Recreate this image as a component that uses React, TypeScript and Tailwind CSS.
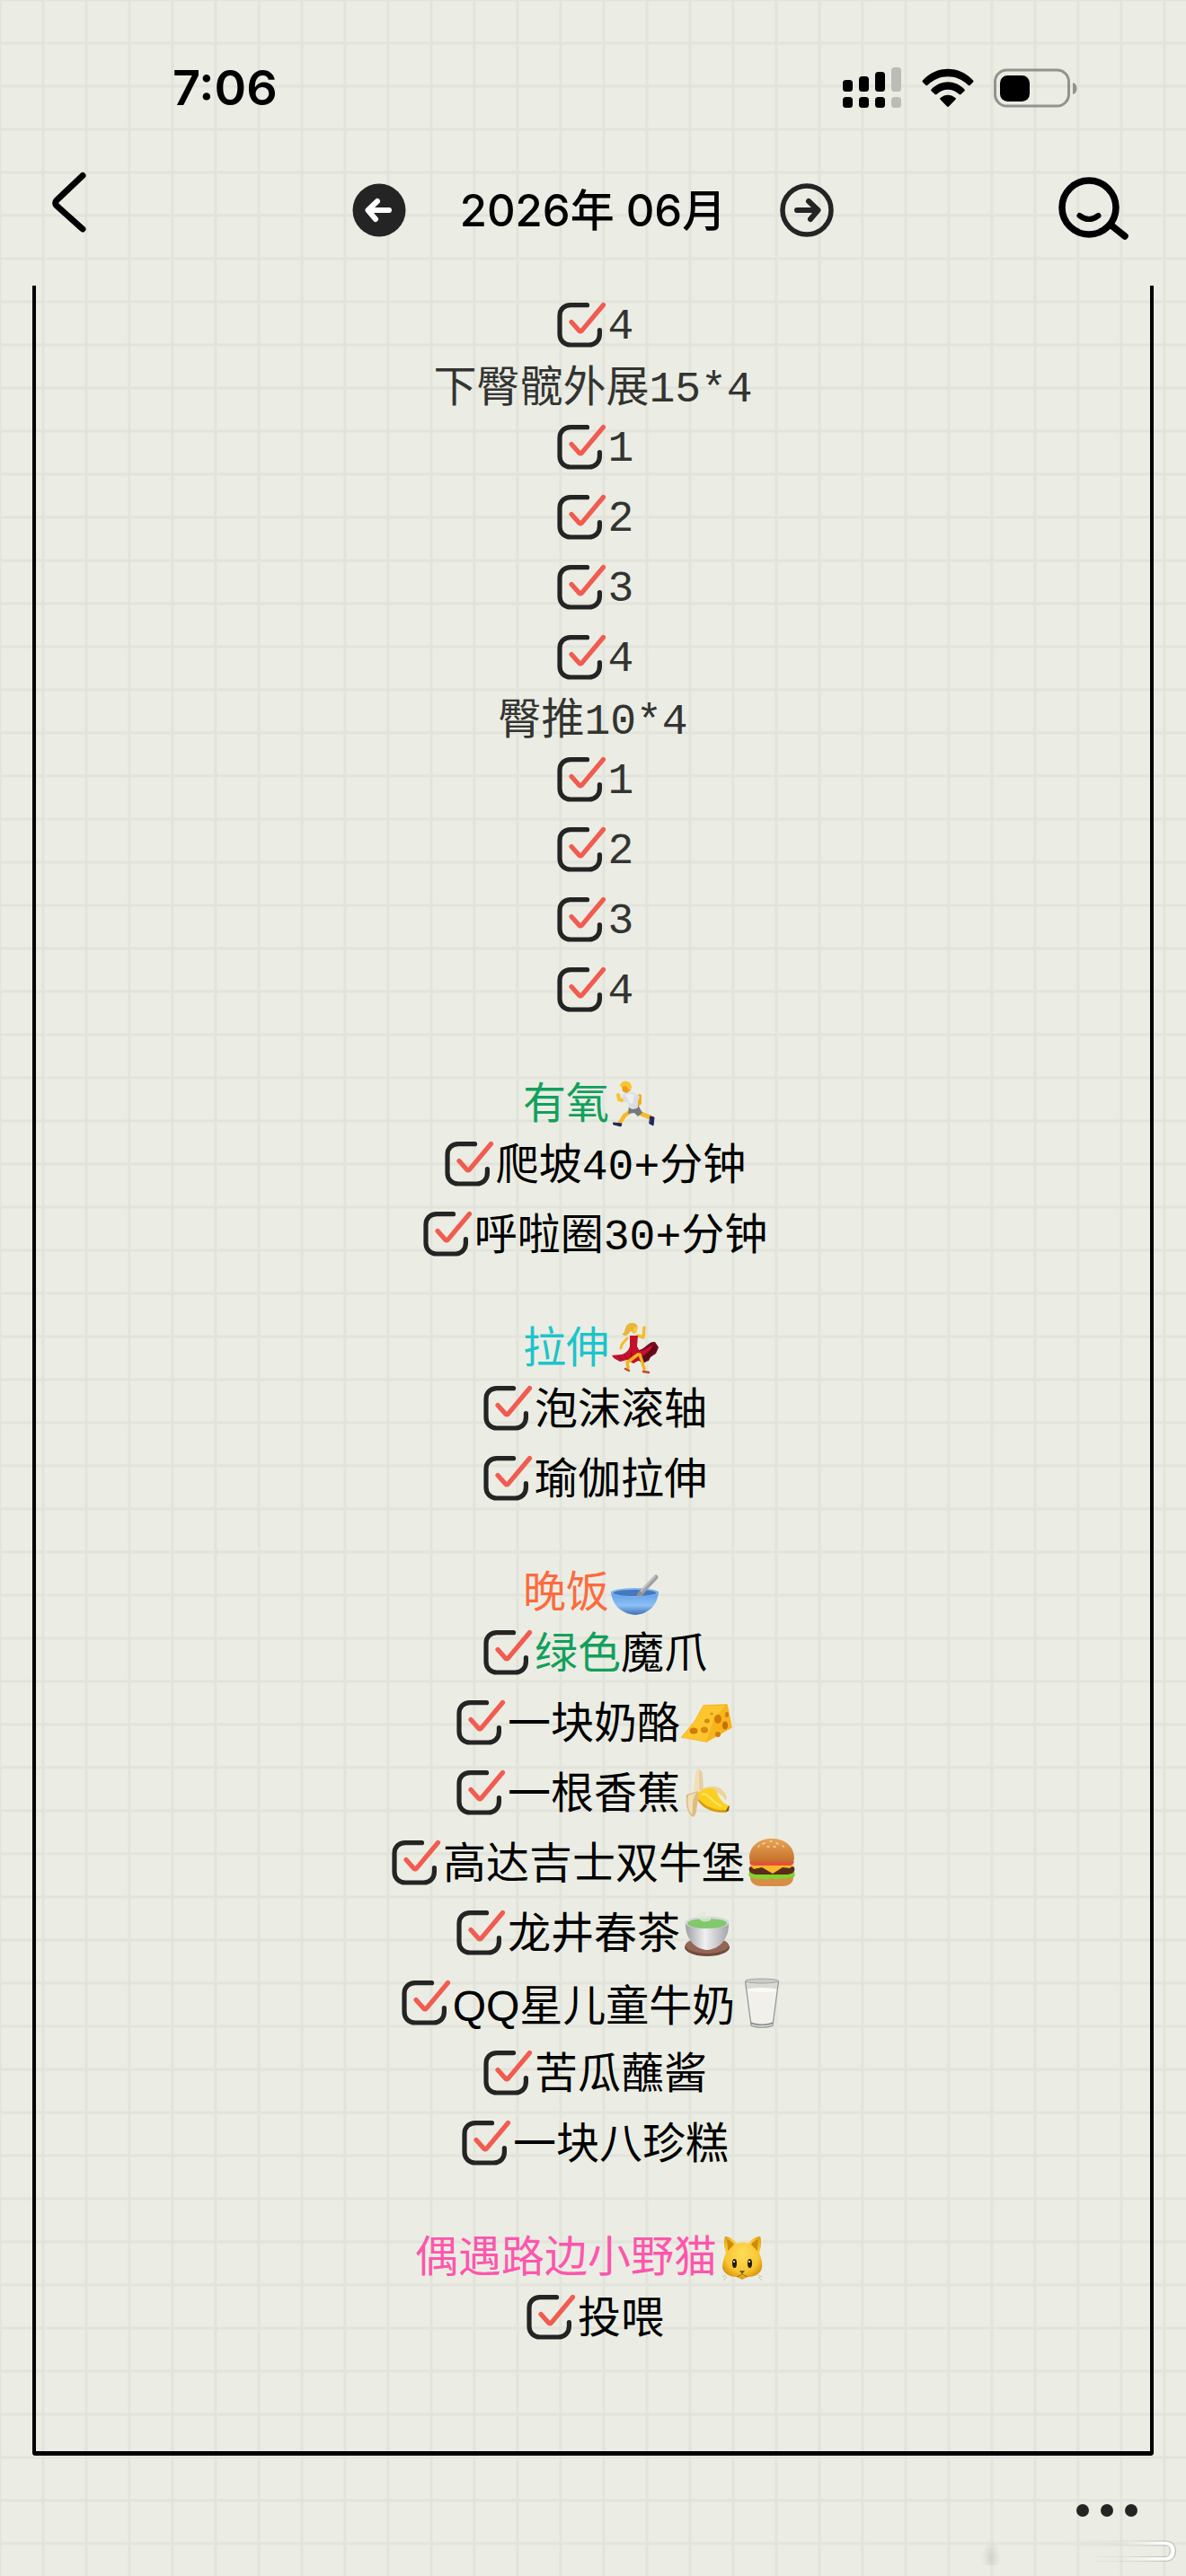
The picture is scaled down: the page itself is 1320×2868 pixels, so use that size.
import { useState } from "react";
import type { ReactNode } from "react";

type EmojiName =
  | "runner"
  | "dancer"
  | "bowl"
  | "cheese"
  | "banana"
  | "burger"
  | "tea"
  | "milk"
  | "cat";

interface Task {
  text: string;
  prefix?: string;
  emoji?: EmojiName;
  sans?: boolean;
}

interface Section {
  title?: string;
  titleClass?: string;
  emoji?: EmojiName;
  muted?: boolean;
  spaced?: boolean;
  tasks: Task[];
}

const sections: Section[] = [
  { muted: true, tasks: [{ text: "4" }] },
  {
    title: "下臀髋外展15*4",
    titleClass: "text-[#333432]",
    muted: true,
    tasks: [{ text: "1" }, { text: "2" }, { text: "3" }, { text: "4" }],
  },
  {
    title: "臀推10*4",
    titleClass: "text-[#333432]",
    muted: true,
    tasks: [{ text: "1" }, { text: "2" }, { text: "3" }, { text: "4" }],
  },
  {
    title: "有氧",
    titleClass: "text-[#12a05c]",
    emoji: "runner",
    spaced: true,
    tasks: [{ text: "爬坡40+分钟" }, { text: "呼啦圈30+分钟" }],
  },
  {
    title: "拉伸",
    titleClass: "text-[#1cc4cc]",
    emoji: "dancer",
    spaced: true,
    tasks: [{ text: "泡沫滚轴" }, { text: "瑜伽拉伸" }],
  },
  {
    title: "晚饭",
    titleClass: "text-[#fb6b3f]",
    emoji: "bowl",
    spaced: true,
    tasks: [
      { prefix: "绿色", text: "魔爪" },
      { text: "一块奶酪", emoji: "cheese" },
      { text: "一根香蕉", emoji: "banana" },
      { text: "高达吉士双牛堡", emoji: "burger" },
      { text: "龙井春茶", emoji: "tea" },
      { text: "QQ星儿童牛奶", emoji: "milk", sans: true },
      { text: "苦瓜蘸酱" },
      { text: "一块八珍糕" },
    ],
  },
  {
    title: "偶遇路边小野猫",
    titleClass: "text-[#fc56ad]",
    emoji: "cat",
    spaced: true,
    tasks: [{ text: "投喂" }],
  },
];

const emojiLabels: Record<EmojiName, string> = {
  runner: "🏃",
  dancer: "💃",
  bowl: "🥣",
  cheese: "🧀",
  banana: "🍌",
  burger: "🍔",
  tea: "🍵",
  milk: "🥛",
  cat: "🐱",
};

const emojiArt: Record<EmojiName, ReactNode> = {
  runner: (
    <g strokeLinecap="round" strokeLinejoin="round" fill="none">
      <path d="M34 22 L34 30 L28 35" stroke="#f2ae1c" strokeWidth="4" />
      <path d="M32 40 L38 43 L46 46" stroke="#f6b92a" strokeWidth="5" />
      <path d="M23 40 L17 44 L14 49 L11 53" stroke="#f6b92a" strokeWidth="4.5" />
      <path d="M46 45 L50 46 L49 55 L45 53 Z" fill="#20265c" stroke="#20265c" />
      <path d="M5 52 L14 53 L13 56 L5 54 Z" fill="#20265c" stroke="#20265c" />
      <path d="M22 33 L32 32 L37 41 L32 45 L28 41 L21 42 Z" fill="#77787c" />
      <path
        d="M15 21 C19 17 26 17 30 20 L34 23 L32 28 L32 35 C28 38 24 37 22 35 L21 29 L16 29 L13 26 Z"
        fill="#dcdde3"
      />
      <path d="M18 21 C21 19 25 19 28 21 L26 31 L23 30 Z" fill="#eeeef2" />
      <path d="M14 27 L11 26 L10 21" stroke="#f8c22e" strokeWidth="4" />
      <path d="M14 11 L23 10 L24 16 L19 19 L15 17 Z" fill="#ec9c1c" />
      <path d="M12 11 C13 4 24 4 25 12 C25 16 22 17 21 14 L19 11 L13 12 Z" fill="#fbc52f" />
    </g>
  ),
  dancer: (
    <g strokeLinecap="round" strokeLinejoin="round" fill="none">
      <path d="M32 17 L38 19 L39 8" stroke="#f5bd2d" strokeWidth="3.5" />
      <path d="M20 20 L14 27 L13 31" stroke="#f5bd2d" strokeWidth="3" />
      <path
        d="M30 34 C42 32 43 23 51 24 L55 30 L52 37 L46 41 L44 45 L37 47 L27 42 Z"
        fill="#760b20"
      />
      <path
        d="M23 17 L32 17 L31 29 L34 34 C42 33 43 29 48 28 L44 37 L36 43 L27 48 L20 44 L12 46 L5 42 L3 39 L14 38 C20 36 22 32 23 29 Z"
        fill="#c4112c"
      />
      <path d="M36 40 C40 39 45 33 51 29 L53 33 L46 40 L40 47 L34 46 Z" fill="#5f0a1c" />
      <path d="M10 40 L15 44 M17 38 L20 43 M25 34 L24 44" stroke="#8e0b22" strokeWidth="1" />
      <path d="M32 38 L20 47 L21 53" stroke="#f2b51f" strokeWidth="3.5" />
      <path d="M34 38 L37 47 L39 54" stroke="#f2b51f" strokeWidth="3.5" />
      <path d="M18 54 L22 56 M38 57 L44 58" stroke="#b84b30" strokeWidth="2.5" />
      <path
        d="M20 5 C26 0 34 4 31 11 L28 15 L24 12 C20 17 18 19 14 15 C18 15 17 8 20 5 Z"
        fill="#e9b63a"
      />
      <path d="M27 8 L31 8 L31 13 L27 15 Z" fill="#f8c83c" />
    </g>
  ),
  bowl: (
    <g>
      <path d="M2 30 C3 45 14 55 29 56 C44 55 54 45 55 30 Z" fill="url(#bowlFill)" />
      <ellipse cx="28.5" cy="31" rx="26.5" ry="5" fill="#7eb4ef" />
      <ellipse cx="28.5" cy="31.5" rx="24" ry="3.5" fill="#4479bd" />
      <path d="M34 33 L52 14" stroke="#9fa0a6" strokeWidth="5" strokeLinecap="round" />
      <path d="M35 30 L51 13" stroke="#c5c5ca" strokeWidth="1.5" strokeLinecap="round" />
      <path d="M30 35 L34 29 L39 34 Z" fill="#8c8f98" />
    </g>
  ),
  cheese: (
    <g>
      <path d="M2 46 L16 29 L26 11 L52 10 L57 35 L29 51 Z" fill="#f7b51d" stroke="#f7b51d" strokeWidth="1.5" strokeLinejoin="round" />
      <path d="M2 46 L16 29 L26 11 L50 11 L37 27 L29 51 Z" fill="#fdc62e" />
      <ellipse cx="15" cy="39" rx="4.5" ry="3.5" fill="#d17b0b" />
      <ellipse cx="27" cy="38" rx="4" ry="3.5" fill="#d68612" />
      <ellipse cx="30" cy="28" rx="3" ry="2.5" fill="#d68612" />
      <ellipse cx="42" cy="26" rx="4" ry="5" fill="#d47a09" />
      <ellipse cx="50" cy="33" rx="3" ry="4.5" fill="#c96f08" />
      <ellipse cx="52" cy="21" rx="2" ry="3" fill="#d47a09" />
      <ellipse cx="35" cy="20" rx="2" ry="1.5" fill="#de9618" />
      <ellipse cx="42" cy="43" rx="3" ry="3" fill="#d47a09" />
    </g>
  ),
  banana: (
    <g>
      <path d="M17 7 C19 2 22 2 24 6 L26 28 L15 29 Z" fill="#f1dfba" />
      <path d="M21 4 L25 7 L26 27 L21 27 Z" fill="#e0c594" opacity=".6" />
      <path d="M26 25 C38 19 50 26 52 35 L51 39 C46 31 40 27 30 30 Z" fill="#ecd49a" />
      <path d="M7 32 L20 28 L22 34 C17 42 20 52 15 57 C8 55 6 42 7 32 Z" fill="#dcbd84" />
      <path d="M9 33 L18 30 C12 38 15 49 13 54 C8 49 8 39 9 33 Z" fill="#f1dfb8" />
      <path
        d="M20 30 C26 25 36 23 40 28 C43 34 46 42 54 44 C54 48 53 51 50 52 C38 52 25 47 20 38 Z"
        fill="#fbcf22"
      />
      <path d="M21 37 C28 46 40 50 51 49 L50 52 C37 53 25 47 20 39 Z" fill="#d99c12" />
      <path d="M24 32 C30 28 34 40 46 45" stroke="#fee566" strokeWidth="2" fill="none" />
      <path d="M50 52 L53 46 L55 44 L54 50 Z" fill="#79591d" />
    </g>
  ),
  burger: (
    <g>
      <path d="M6 44 H54 C55 52 49 56 42 56 H18 C11 56 5 52 6 44 Z" fill="#d98c45" />
      <path
        d="M5 40 H55 C57 45 54 48 50 46 C46 50 43 46 39 48 C35 50 31 46 27 48 C22 50 20 47 16 48 C11 49 9 46 6 46 C4 45 4 43 5 40 Z"
        fill="#84cf2e"
      />
      <path d="M5 35 C10 31 50 31 55 35 C57 41 51 43 46 43 H14 C9 43 3 41 5 35 Z" fill="#592d1a" />
      <path d="M5 32 H55 L50 36 L42 35 L31 42 L19 35 L10 37 Z" fill="#fdb827" />
      <path d="M6 27 H54 C56 31 52 33 49 33 H11 C7 33 4 31 6 27 Z" fill="#e4513c" />
      <path
        d="M5 25 C5 11 16 3 30 3 C44 3 55 11 55 25 C55 29 50 30 45 29 H15 C10 30 5 29 5 25 Z"
        fill="url(#bunFill)"
      />
      <path
        d="M20 9 l2 -1 M28 6 l2 0 M35 8 l2 1 M42 11 l1 1 M25 12 l2 0 M32 12 l2 0 M15 12 l1 -1"
        stroke="#f6d7a0"
        strokeWidth="1.5"
        strokeLinecap="round"
      />
    </g>
  ),
  tea: (
    <g>
      <ellipse cx="30" cy="46" rx="25" ry="10" fill="#714a3c" />
      <ellipse cx="30" cy="44" rx="24" ry="9" fill="#946654" />
      <path d="M6 18 C5 35 15 48 30 49 C45 48 55 35 54 18 Z" fill="url(#cupFill)" />
      <ellipse cx="30" cy="18.5" rx="24.5" ry="7" fill="#d7d8dc" />
      <ellipse cx="30" cy="19.5" rx="22" ry="5.5" fill="#82c86c" />
      <path
        d="M22 15 C14 11 24 6 22 11 C22 4 31 5 28 12 C36 11 36 17 30 17 C28 18 24 18 22 15 Z"
        fill="#dfe9da"
        opacity=".75"
      />
    </g>
  ),
  milk: (
    <g>
      <path d="M11 6 L18 55 C23 58 37 58 42 55 L49 6 Z" fill="#d2d4d0" opacity=".75" />
      <path d="M12 15 L18 51 C24 54 36 54 42 51 L48 15 Z" fill="#f2f0eb" />
      <ellipse cx="30" cy="15.5" rx="17" ry="2.5" fill="#faf9f6" />
      <ellipse cx="30" cy="5.5" rx="18.5" ry="2.5" fill="#c9ccc8" stroke="#a3a7a5" />
      <path d="M11.5 6 L18 55 C23 58 37 58 42 55 L48.5 6" fill="none" stroke="#8f9393" strokeWidth="1.2" />
      <path d="M18 52 C23 55 37 55 42 52" fill="none" stroke="#73777a" strokeWidth="1.2" />
    </g>
  ),
  cat: (
    <g>
      <path
        d="M9 8 C15 8 20 13 22 16 C26 14 31 14 35 16 C38 12 42 8 48 8 C50 13 49 21 47 26 C49 32 51 37 50 43 C48 52 38 53 34 53 L28 56 L22 53 C15 53 8 50 6 43 C6 37 8 31 10 26 C8 21 7 13 9 8 Z"
        fill="url(#catFill)"
      />
      <path
        d="M11 11 C15 12 18 15 19 17 L12 24 Z M46 11 C42 12 39 15 38 17 L45 24 Z"
        fill="#cf8b0a"
      />
      <ellipse cx="19.5" cy="38" rx="2.5" ry="5" fill="#231b12" />
      <ellipse cx="36.5" cy="38" rx="2.5" ry="5" fill="#231b12" />
      <circle cx="19" cy="36" r="1" fill="#fff" />
      <circle cx="36" cy="36" r="1" fill="#fff" />
      <path d="M25 46 H31 L28 50 Z" fill="#6d5c43" />
      <path d="M28 50 L22 53 M28 50 L34 53" stroke="#a66f10" />
      <path d="M6 53 L10 51 M7 57 L11 53 M50 53 L46 51 M50 57 L46 53" stroke="#c9c1aa" />
    </g>
  ),
};

function Emoji({ name }: { name: EmojiName }) {
  return (
    <svg
      role="img"
      aria-label={emojiLabels[name]}
      viewBox="0 0 60 60"
      className="size-15 shrink-0"
    >
      {emojiArt[name]}
    </svg>
  );
}

// Shared gradients for the emoji drawings
function Gradients() {
  return (
    <svg aria-hidden="true" className="absolute size-0">
      <defs>
        <linearGradient id="bowlFill" x1="0" y1="0" x2="0" y2="1">
          <stop offset="0" stopColor="#5c9be6" />
          <stop offset=".6" stopColor="#8cbff5" />
          <stop offset="1" stopColor="#3d6fb4" />
        </linearGradient>
        <linearGradient id="bunFill" x1="0" y1="0" x2="0" y2="1">
          <stop offset="0" stopColor="#e9a45a" />
          <stop offset="1" stopColor="#c46f28" />
        </linearGradient>
        <linearGradient id="cupFill" x1="0" y1="0" x2="1" y2="0">
          <stop offset="0" stopColor="#9d9ea3" />
          <stop offset=".45" stopColor="#f0f0f3" />
          <stop offset="1" stopColor="#a3a4aa" />
        </linearGradient>
        <radialGradient id="catFill" cx=".5" cy=".4" r=".6">
          <stop offset="0" stopColor="#fedd5a" />
          <stop offset=".7" stopColor="#f9c62f" />
          <stop offset="1" stopColor="#d9960d" />
        </radialGradient>
      </defs>
    </svg>
  );
}

function TaskRow({ task, muted }: { task: Task; muted?: boolean }) {
  const [checked, setChecked] = useState(true);

  return (
    <li className="flex h-[78px] items-center justify-center">
      <label className="flex items-center">
        <span className="grid size-[62px] shrink-0">
          <input
            type="checkbox"
            checked={checked}
            onChange={() => setChecked(!checked)}
            className="col-start-1 row-start-1 size-full appearance-none"
          />
          <svg
            viewBox="0 0 62 62"
            fill="none"
            strokeWidth="5.2"
            strokeLinecap="round"
            strokeLinejoin="round"
            className="pointer-events-none col-start-1 row-start-1 size-full"
          >
            <path
              d="M38.5 8.7 H20 C13 8.7 8 13.5 8 20.5 V41 C8 48 13 53 20 53 H40.5 C47.5 53 52.4 48 52.4 41 V36.7"
              stroke="#242424"
            />
            {checked && (
              <path d="M21 27.5 L29.7 37.3 Q31 38.5 32.3 37.3 L56.5 8.5" stroke="#f15b50" />
            )}
          </svg>
        </span>
        <span
          className={`whitespace-nowrap ${
            task.sans ? "font-['Liberation_Sans','Noto_Sans_CJK_SC',sans-serif]" : ""
          } ${muted ? "pt-1 text-[#333432]" : "pt-2 text-black"}`}
        >
          {task.prefix && <span className="text-[#12a05c]">{task.prefix}</span>}
          {task.text}
        </span>
        {task.emoji && <Emoji name={task.emoji} />}
      </label>
    </li>
  );
}

function StatusBar() {
  return (
    <div className="flex h-36 items-center justify-between pt-13 pr-[120px] pl-48">
      <time className="font-['Inter',sans-serif] text-[54px] leading-none font-semibold">
        7:06
      </time>
      <div className="flex items-center gap-[22px]">
        <svg aria-label="Signal" viewBox="0 0 66 46" className="h-[46px] w-[66px]">
          <g>
            <rect x="0" y="14" width="11" height="13" rx="3.5" />
            <rect x="18" y="10" width="11" height="17" rx="3.5" />
            <rect x="36" y="5" width="11" height="22" rx="3.5" />
            <rect x="0" y="33" width="11" height="12" rx="3.5" />
            <rect x="18" y="33" width="11" height="12" rx="3.5" />
            <rect x="36" y="33" width="11" height="12" rx="3.5" />
          </g>
          <g fill="#bbbcb5">
            <rect x="54" y="0" width="11" height="27" rx="3.5" />
            <rect x="54" y="33" width="11" height="12" rx="3.5" />
          </g>
        </svg>
        <svg aria-label="Wi-Fi" viewBox="0 0 58 44" className="h-11 w-[58px]">
          <path d="M1 13.5 C16 -3.5 42 -3.5 57 13.5 Q58 14.5 57 15.5 L53.5 19 Q52.5 19.5 51.5 18.8 C39 6 19 6 6.5 18.8 Q5.5 19.5 4.5 19 L1 15.5 Q0 14.5 1 13.5 Z" />
          <path d="M10.5 23.5 C21 12.5 37 12.5 47.5 23.5 Q48.3 24.5 47.5 25.3 L43.5 29 Q42.5 29.7 41.5 29 C34 22 24 22 16.5 29 Q15.5 29.7 14.5 29 L10.5 25.3 Q9.7 24.5 10.5 23.5 Z" />
          <path d="M20.5 33 C26 28.5 32 28.5 37.5 33 Q38.3 34 37.5 34.8 L30 42.5 Q29 43.4 28 42.5 L20.5 34.8 Q19.7 34 20.5 33 Z" />
        </svg>
        <svg aria-label="Battery" viewBox="0 0 94 44" className="h-11 w-[94px]">
          <rect x="1.5" y="2" width="82" height="40" rx="13" fill="none" stroke="#92938d" strokeWidth="3" />
          <rect x="7" y="8" width="33" height="29" rx="8.5" />
          <path d="M88 16 C94 17 94 28 88 29 Z" fill="#92938d" />
        </svg>
      </div>
    </div>
  );
}

function Header() {
  return (
    <header className="flex h-[174px] items-center justify-between px-12">
      <button aria-label="返回" className="flex w-[100px]">
        <svg
          viewBox="0 0 54 80"
          fill="none"
          stroke="#000"
          strokeWidth="7"
          strokeLinecap="round"
          strokeLinejoin="round"
          className="h-20 w-[54px]"
        >
          <path d="M44 4.5 L15 32 Q12.5 35 15 38 L44 64" />
        </svg>
      </button>
      <div className="flex items-center gap-15 pt-1.5">
        <button aria-label="上个月">
          <svg
            viewBox="0 0 60 60"
            fill="none"
            stroke="#fff"
            strokeWidth="6"
            strokeLinecap="round"
            strokeLinejoin="round"
            className="size-15"
          >
            <circle cx="30" cy="30" r="29.5" fill="#242424" stroke="none" />
            <path d="M41 30 H18 M28 20 L17.5 30 L26 40" />
          </svg>
        </button>
        <h1 className="font-['Inter','Noto_Sans_CJK_SC',sans-serif] text-[49px] leading-none font-medium whitespace-nowrap">
          2026年 06月
        </h1>
        <button aria-label="下个月">
          <svg
            viewBox="0 0 60 60"
            fill="none"
            stroke="#242424"
            strokeWidth="6"
            strokeLinecap="round"
            strokeLinejoin="round"
            className="size-15"
          >
            <circle cx="30" cy="30" r="27" strokeWidth="5.5" />
            <path d="M19 30 H42 M32 20 L42.5 30 L34 40" />
          </svg>
        </button>
      </div>
      <button aria-label="搜索" className="flex w-[100px]">
        <svg
          viewBox="0 0 100 72"
          fill="none"
          stroke="#000"
          strokeWidth="7.5"
          strokeLinecap="round"
          strokeLinejoin="round"
          className="h-[72px] w-full"
        >
          <circle cx="40" cy="36" r="30" />
          <path d="M29.5 45 Q40 53 50.5 45" strokeWidth="6" />
          <path d="M65 56 L80 68" />
        </svg>
      </button>
    </header>
  );
}

function Footer() {
  return (
    <footer className="flex h-[134px] justify-end pt-[54px]">
      <div className="flex flex-col items-end">
        <button aria-label="更多" className="mr-[54px] flex gap-[13px]">
          <span className="size-3.5 rounded-full bg-[#242424]" />
          <span className="size-3.5 rounded-full bg-[#242424]" />
          <span className="size-3.5 rounded-full bg-[#242424]" />
        </button>
        <svg aria-hidden="true" viewBox="0 0 240 60" fill="none" className="mt-1.5 h-15 w-60">
          <defs>
            <linearGradient id="pillFade" gradientUnits="userSpaceOnUse" x1="100" x2="228" y1="0" y2="0">
              <stop offset="0" stopColor="#b9bbb4" stopOpacity="0" />
              <stop offset=".6" stopColor="#b9bbb4" stopOpacity=".3" />
              <stop offset="1" stopColor="#b9bbb4" />
            </linearGradient>
            <linearGradient id="hookFade" gradientUnits="userSpaceOnUse" x1="170" x2="220" y1="0" y2="0">
              <stop offset="0" stopColor="#fff" stopOpacity="0" />
              <stop offset="1" stopColor="#fff" />
            </linearGradient>
            <radialGradient id="smudge" cx=".5" cy=".8" r=".5">
              <stop offset="0" stopColor="#cfd0ca" />
              <stop offset="1" stopColor="#dcded5" stopOpacity="0" />
            </radialGradient>
          </defs>
          <rect x="12" y="6" width="22" height="42" fill="url(#smudge)" />
          <path
            d="M100 21 H217 Q228.500 21 228.500 32 Q228.500 43.500 217 43.500 H140 M140 38.500 H217 Q222 38.500 222 32 Q222 26 217 26 H100"
            stroke="url(#pillFade)"
          />
          <path
            d="M170 23.500 H217 Q225.500 24 225.500 32 Q225.500 40.500 217 41 H170"
            stroke="url(#hookFade)"
            strokeWidth="3"
          />
        </svg>
      </div>
    </footer>
  );
}

export default function App() {
  return (
    <div className="flex min-h-screen flex-col bg-[#ebede4] bg-[linear-gradient(to_right,transparent,#e2e4db_1px,#e2e4db_3px,transparent_4px),linear-gradient(to_bottom,transparent,#e2e4db_1px,#e2e4db_3px,transparent_4px)] bg-[length:48px_48px] bg-[position:46px_46px] text-black">
      <Gradients />
      <StatusBar />
      <Header />
      <main className="mx-9 rounded-b-[4px] border-x-4 border-b-[5px] border-black pt-[5px] pb-[110px] font-['Liberation_Mono','Noto_Sans_CJK_SC',monospace] text-[48px] leading-[58px]">
        {sections.map((section, index) => (
          <section key={index} className={section.spaced ? "pt-[58px]" : ""}>
            {section.title && (
              <h2
                className={`flex h-[58px] items-center justify-center whitespace-nowrap ${section.titleClass}`}
              >
                <span className="pt-2">{section.title}</span>
                {section.emoji && <Emoji name={section.emoji} />}
              </h2>
            )}
            <ul>
              {section.tasks.map((task) => (
                <TaskRow key={task.text} task={task} muted={section.muted} />
              ))}
            </ul>
          </section>
        ))}
      </main>
      <Footer />
    </div>
  );
}
